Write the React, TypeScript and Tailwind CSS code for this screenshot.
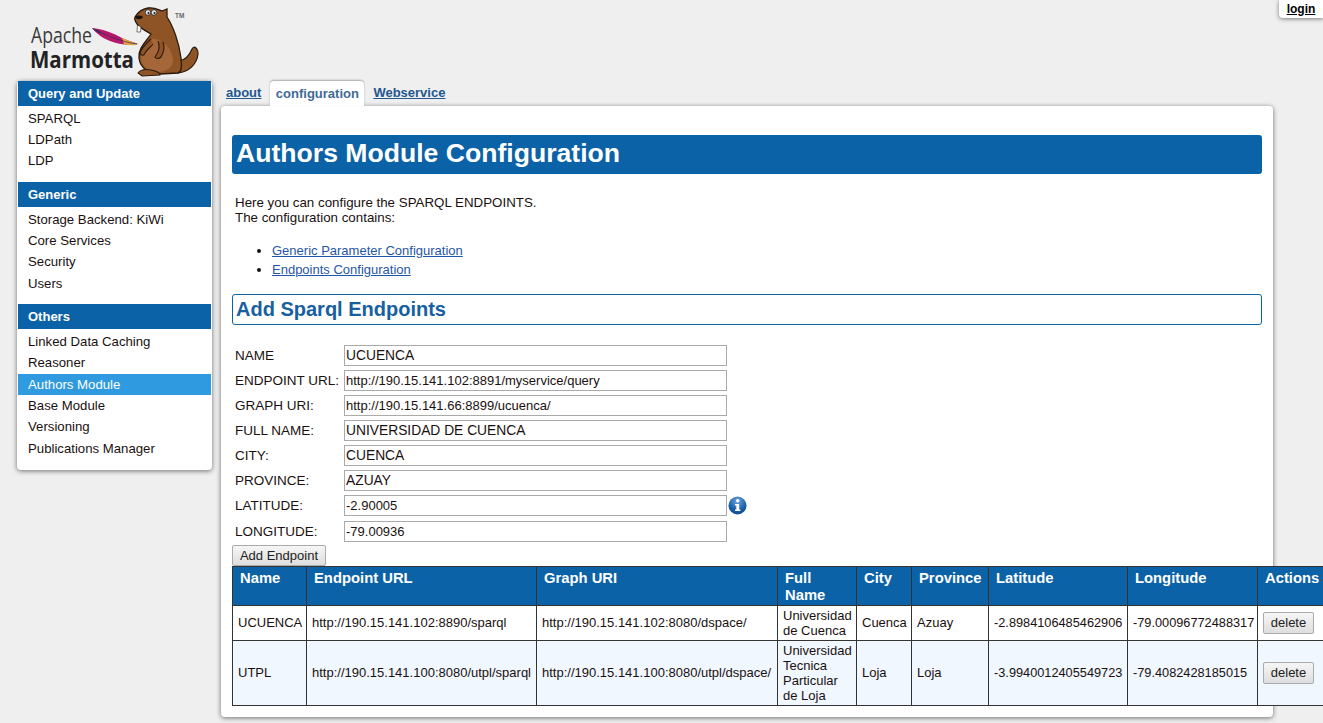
import React from 'react';

const menu = [
  { title: 'Query and Update', items: ['SPARQL', 'LDPath', 'LDP'] },
  { title: 'Generic', items: ['Storage Backend: KiWi', 'Core Services', 'Security', 'Users'] },
  { title: 'Others', items: ['Linked Data Caching', 'Reasoner', 'Authors Module', 'Base Module', 'Versioning', 'Publications Manager'] },
];

const fields = [
  ['NAME', 'UCUENCA', 'text-[13.8px]'],
  ['ENDPOINT URL:', 'http://190.15.141.102:8891/myservice/query', 'text-[13px]'],
  ['GRAPH URI:', 'http://190.15.141.66:8899/ucuenca/', 'text-[13px]'],
  ['FULL NAME:', 'UNIVERSIDAD DE CUENCA', 'text-[13.8px]'],
  ['CITY:', 'CUENCA', 'text-[13.8px]'],
  ['PROVINCE:', 'AZUAY', 'text-[13.8px]'],
  ['LATITUDE:', '-2.90005', 'text-[13px]'],
  ['LONGITUDE:', '-79.00936', 'text-[13px]'],
];

const columns = [
  ['Name', 'w-[74px]'],
  ['Endpoint URL', 'w-[230px]'],
  ['Graph URI', 'w-[241px]'],
  ['Full Name', 'w-[79px]'],
  ['City', 'w-[55px]'],
  ['Province', 'w-[77px]'],
  ['Latitude', 'w-[139px]'],
  ['Longitude', 'w-[130px]'],
  ['Actions', 'w-[68px]'],
];

const rows = [
  ['UCUENCA', 'http://190.15.141.102:8890/sparql', 'http://190.15.141.102:8080/dspace/', 'Universidad de Cuenca', 'Cuenca', 'Azuay', '-2.8984106485462906', '-79.00096772488317'],
  ['UTPL', 'http://190.15.141.100:8080/utpl/sparql', 'http://190.15.141.100:8080/utpl/dspace/', 'Universidad Tecnica Particular de Loja', 'Loja', 'Loja', '-3.9940012405549723', '-79.4082428185015'],
];

const Logo = () => (
  <svg width="180" height="74" viewBox="0 0 180 74" className="block">
    <text x="1" y="37" fontFamily="Open Sans" fontSize="21" fill="#3a3a3a" textLength="61" lengthAdjust="spacingAndGlyphs">Apache</text>
    <text x="0" y="62" fontFamily="Open Sans" fontSize="22.5" fontWeight="700" fill="#222" textLength="104" lengthAdjust="spacingAndGlyphs">Marmotta</text>
    {/* feather */}
    <path d="M62 22 C72 23 84 27 92 32 C99 35 104 36 108 38 C98 40 88 38 80 35 C72 32 66 27 62 22Z" fill="#b5186a" />
    <path d="M92 32 C99 35 104 36 108 38 C103 40 98 39 94 38Z" fill="#e8a53a" />
    <path d="M62 22 C66 23 70 25 72 28 C68 27 64 25 62 22Z" fill="#41305f" />
    <path d="M66 24 C78 30 92 36 107 38" stroke="#3e2a63" strokeWidth="0.8" fill="none" />
    {/* tail */}
    <path d="M149 55 C156 54 160 48 162 43 C164 39 168 42 168 48 C167 58 159 66 148 67Z" fill="#8f5425" stroke="#2a1a0e" strokeWidth="1.2" />
    {/* body */}
    <path d="M105 11 C108 6 112 3 118 2 C124 1 129 4 132 5 L137 3 L137 11 C143 20 149 36 151 52 C152 60 152 66 148 67 L130 68 C119 68 110 62 109 52 C108 42 116 36 121 28 C116 25 110 22 107 18 C105 15 104 13 105 11Z" fill="#8f5425" stroke="#2a1a0e" strokeWidth="1.3" />
    <path d="M122 33 C132 32 142 42 143 54 C143 62 136 66 128 66 C118 66 111 60 111 51 C111 43 116 36 122 33Z" fill="#a5673a" />
    {/* feet and arms */}
    <path d="M108 67 C111 63 116 63 121 64 C126 65 130 67 130 69 L112 70Z" fill="#8f5425" stroke="#2a1a0e" strokeWidth="1.1" />
    <path d="M121 33 C117 37 111 42 110 47 C111 50 114 50 115 47 C117 43 121 41 123 38" fill="#8f5425" stroke="#2a1a0e" strokeWidth="1.1" />
    <path d="M128 35 C130 40 129 46 125 51 C126 53 129 53 131 51 C134 46 135 41 133 36" fill="#8f5425" stroke="#2a1a0e" strokeWidth="1.1" />
    {/* teeth */}
    <path d="M107.5 19 L107 26 L110.5 26 L111 21Z" fill="#fff" stroke="#2a1a0e" strokeWidth="0.6" />
    {/* glasses and nose */}
    <circle cx="118" cy="6.5" r="2.8" fill="#e5e5e5" stroke="#333" strokeWidth="0.9" />
    <circle cx="124" cy="6.5" r="2.8" fill="#e5e5e5" stroke="#333" strokeWidth="0.9" />
    <circle cx="118.5" cy="7" r="1" fill="#111" />
    <circle cx="124.5" cy="7" r="1" fill="#111" />
    <path d="M105 11 C107 9 111 9 113 11 C111 14 107 14 105 11Z" fill="#1a100a" />
    <text x="145" y="12" fontFamily="Liberation Sans" fontSize="6.5" fontWeight="700" fill="#666">TM</text>
  </svg>
);

const InfoIcon = () => (
  <svg width="19" height="19" viewBox="0 0 19 19" className="ml-[1px] shrink-0">
    <defs>
      <radialGradient id="info" cx="50%" cy="25%" r="80%">
        <stop offset="0%" stopColor="#6fa6dc" />
        <stop offset="60%" stopColor="#1c62ad" />
        <stop offset="100%" stopColor="#0d4688" />
      </radialGradient>
    </defs>
    <circle cx="9.5" cy="9.5" r="9" fill="url(#info)" />
    <circle cx="9.7" cy="4.8" r="1.7" fill="#fff" />
    <path d="M7 8 H11.2 V13.5 H12.4 V15 H7 V13.5 H8.3 V9.5 H7Z" fill="#fff" />
  </svg>
);

const DeleteButton = () => (
  <button className="block h-[22px] w-[51px] rounded-[2px] border border-[#aaa] bg-gradient-to-b from-[#f6f6f6] to-[#dedede] text-[13px] text-[#222]">
    delete
  </button>
);

export default function App() {
  return (
    <div className="relative h-[723px] w-[1323px] overflow-hidden bg-[#efefef] font-['Liberation_Sans',Arial,sans-serif] text-[13.33px] text-[#1a1010]">
      <div className="absolute right-0 top-0 flex h-[18px] w-[44px] items-center justify-center rounded-bl-[4px] bg-white shadow-[0_1px_4px_rgba(0,0,0,0.5)]">
        <a className="text-[12px] font-bold text-black underline">login</a>
      </div>

      <header className="h-[81px] pl-[30px] pt-[6px]">
        <Logo />
      </header>

      <div className="flex items-start">
        <nav className="ml-[17px] w-[195px] rounded-[4px] bg-white px-[1px] pb-[1px] text-[13.2px] shadow-[0_1px_5px_rgba(0,0,0,0.55)]">
          {menu.map((section) => (
            <div key={section.title} className="pb-[10px]">
              <h3 className="flex h-[25px] items-center bg-[#0c62a6] pl-[10px] text-[13px] font-bold text-white">
                {section.title}
              </h3>
              <ul className="pt-[2px]">
                {section.items.map((item) => (
                  <li
                    key={item}
                    className={
                      item === 'Authors Module'
                        ? 'flex h-[21.33px] items-center bg-[#2f9ae0] pl-[10px] text-white'
                        : 'flex h-[21.33px] items-center pl-[10px]'
                    }
                  >
                    {item}
                  </li>
                ))}
              </ul>
            </div>
          ))}
        </nav>

        <main className="ml-[9px] w-[1052px]">
          <div className="flex h-[25px] items-end pl-[5px]">
            <a className="mb-[4px] text-[13px] font-bold text-[#23578f] underline">about</a>
            <div className="ml-[9px] flex h-[25px] w-[94px] items-center justify-center rounded-t-[4px] bg-white text-[13px] font-bold text-[#3f6a96] shadow-[0_-1px_2px_rgba(0,0,0,0.3)]">
              configuration
            </div>
            <a className="mb-[4px] ml-[9px] text-[13px] font-bold text-[#23578f] underline">Webservice</a>
          </div>

          <div className="h-[611px] rounded-[4px] bg-white px-[11px] pt-[29px] shadow-[0_1px_5px_rgba(0,0,0,0.55)]">
            <h1 className="flex h-[39px] items-center rounded-[3px] bg-[#0c62a6] pb-[1px] pl-[4px] text-[26.6px] font-bold text-white">
              Authors Module Configuration
            </h1>

            <p className="ml-[3px] mt-[21px] leading-[15px]">
              Here you can configure the SPARQL ENDPOINTS.
              <br />
              The configuration contains:
            </p>

            <ul className="ml-[40px] mt-[17px] list-disc text-[13px]">
              <li className="h-[19px] leading-[17px]">
                <a className="text-[#1f56a5] underline">Generic Parameter Configuration</a>
              </li>
              <li className="h-[19px] leading-[17px]">
                <a className="text-[#1f56a5] underline">Endpoints Configuration</a>
              </li>
            </ul>

            <h2 className="mt-[14px] flex h-[31px] items-center rounded-[3px] border border-[#0c62a6] pb-[2px] pl-[3px] text-[20px] font-bold text-[#17609f]">
              Add Sparql Endpoints
            </h2>

            <form className="mt-[20px]">
              {fields.map(([label, value, size], i) => (
                <div key={label} className={i === 7 ? 'mt-[5px] flex h-[21px] items-center' : i === 0 ? 'flex h-[21px] items-center' : 'mt-[4px] flex h-[21px] items-center'}>
                  <label className="ml-[3px] w-[109px] shrink-0 pt-[1px] text-[13.5px]">{label}</label>
                  <input
                    readOnly
                    value={value}
                    className={`h-[21px] w-[383px] border border-[#aaa] bg-white px-[1px] text-[#1a1010] outline-none ${size}`}
                  />
                  {label === 'LATITUDE:' && <InfoIcon />}
                </div>
              ))}
              <button type="button" className="mt-[3px] block h-[21px] w-[94px] rounded-[2px] border border-[#aaa] bg-gradient-to-b from-[#f6f6f6] to-[#dedede] text-[13px] text-[#222]">
                Add Endpoint
              </button>
            </form>

            <table className="w-[1093px] max-w-none table-fixed border-collapse">
              <colgroup>
                {columns.map(([name, width]) => (
                  <col key={name} className={width} />
                ))}
              </colgroup>
              <thead>
                <tr className="h-[39px] bg-[#0c62a6] text-white">
                  {columns.map(([name]) => (
                    <th key={name} className="border border-[#333] px-[7px] pb-[1px] pt-[3px] text-left align-top text-[14.8px] font-bold leading-[17px]">
                      {name}
                    </th>
                  ))}
                </tr>
              </thead>
              <tbody>
                {rows.map((row, i) => (
                  <tr key={row[0]} className={i === 0 ? 'h-[35px] bg-white' : 'h-[65px] bg-[#f0f7fe]'}>
                    {row.map((cell, j) => (
                      <td key={j} className={j > 5 ? 'border border-[#333] px-[5px] pb-[1px] align-middle text-[12.75px] leading-[15px]' : 'border border-[#333] px-[5px] pb-[1px] align-middle text-[13px] leading-[15px]'}>
                        {cell}
                      </td>
                    ))}
                    <td className="border border-[#333] px-[5px] py-0 align-middle">
                      <DeleteButton />
                    </td>
                  </tr>
                ))}
              </tbody>
            </table>
          </div>
        </main>
      </div>
    </div>
  );
}
